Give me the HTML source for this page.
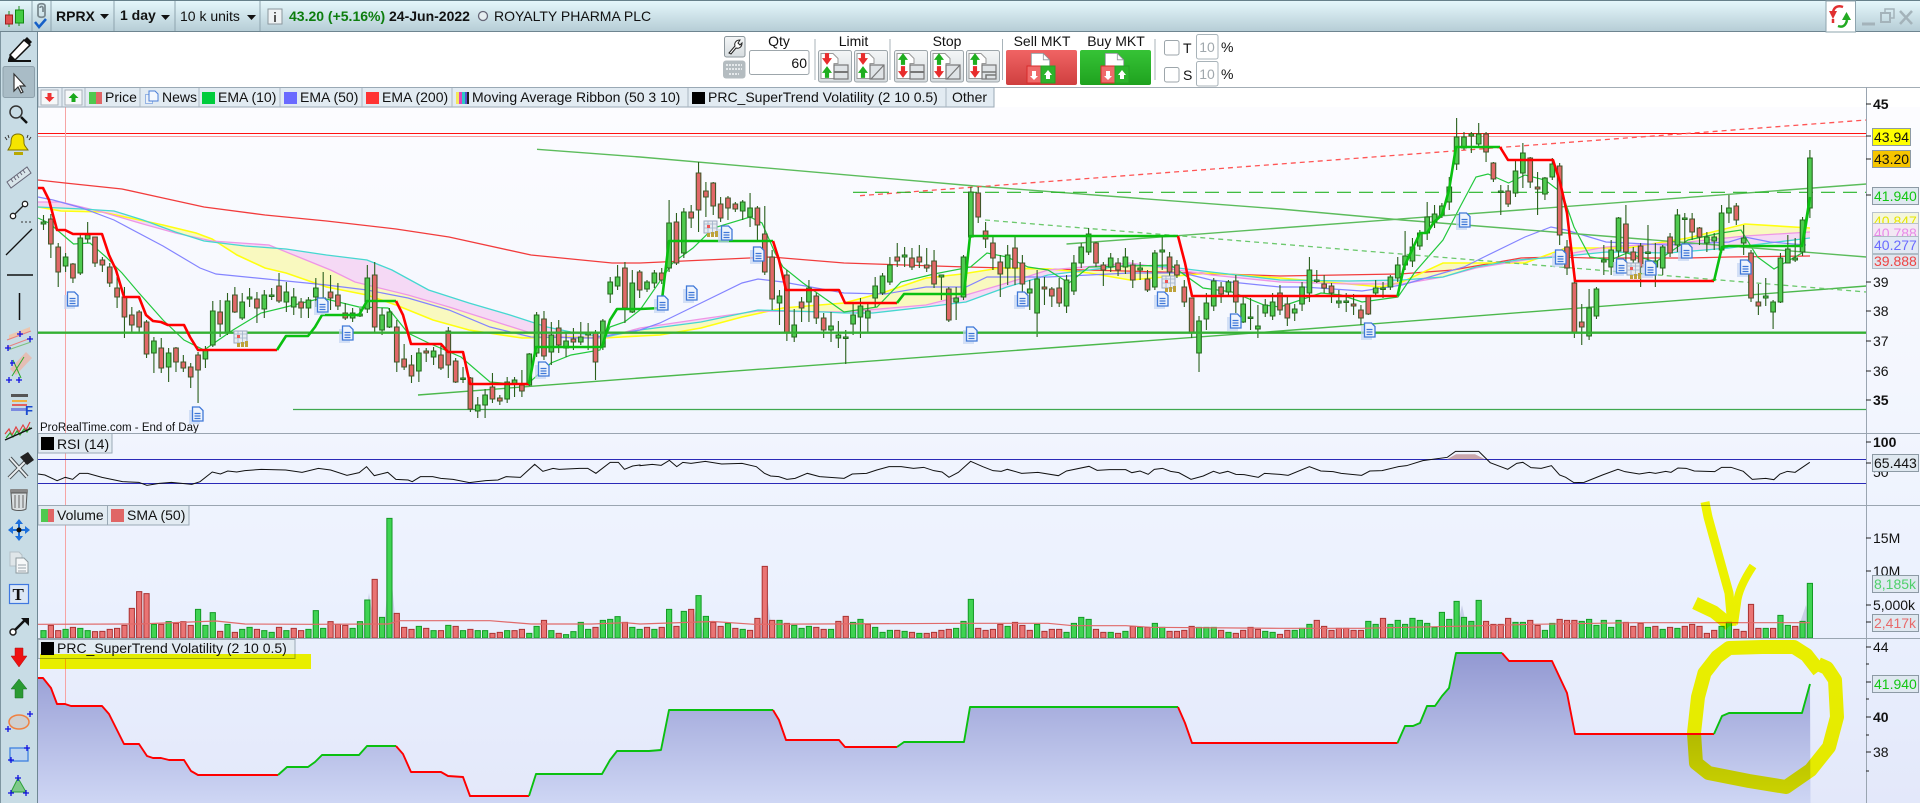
<!DOCTYPE html>
<html><head><meta charset="utf-8"><title>RPRX</title>
<style>
html,body{margin:0;padding:0;background:#fff;width:1920px;height:803px;overflow:hidden}
svg{display:block;position:absolute;left:0;top:0}
text{font-family:"Liberation Sans",Arial,sans-serif;font-size:14px;fill:#111}
.b{font-weight:bold}
.lg{fill:#e2ebf2;stroke:#9aa9b5}
.sep{stroke:#9fb0ba;stroke-width:1}
</style></head><body>
<svg width="1920" height="803" viewBox="0 0 1920 803" xmlns="http://www.w3.org/2000/svg">
<defs>
<linearGradient id="tb" x1="0" y1="0" x2="0" y2="1"><stop offset="0" stop-color="#e6f8fc"/><stop offset="1" stop-color="#b5ccd5"/></linearGradient>
<linearGradient id="pg" gradientUnits="userSpaceOnUse" x1="0" y1="107" x2="0" y2="803"><stop offset="0" stop-color="#fcfcff"/><stop offset=".4" stop-color="#f3f6fe"/><stop offset=".7" stop-color="#ebf1fe"/><stop offset="1" stop-color="#e3e8fa"/></linearGradient>
<linearGradient id="sf" gradientUnits="userSpaceOnUse" x1="0" y1="650" x2="0" y2="803"><stop offset="0" stop-color="#9197d1"/><stop offset="1" stop-color="#ced6f4"/></linearGradient>
<linearGradient id="sb" x1="0" y1="0" x2="0" y2="1"><stop offset="0" stop-color="#f06464"/><stop offset="1" stop-color="#cf3f3f"/></linearGradient>
<linearGradient id="bb" x1="0" y1="0" x2="0" y2="1"><stop offset="0" stop-color="#36c336"/><stop offset="1" stop-color="#1fa21f"/></linearGradient>
<linearGradient id="btn" x1="0" y1="0" x2="0" y2="1"><stop offset="0" stop-color="#f4f6f7"/><stop offset="1" stop-color="#d6dcdf"/></linearGradient>
<clipPath id="cp"><rect x="38" y="107" width="1828.5" height="326"/></clipPath>
<clipPath id="cv"><rect x="38" y="505" width="1828.5" height="133"/></clipPath>
<symbol id="dc" viewBox="0 0 16 19" width="16" height="19" overflow="visible">
<path d="M0 4h11v14H0z" fill="#c5d6f2" opacity=".7"/>
<path d="M3.5 1h7l3.5 3.5V15H3.500z" fill="#eef4fd" stroke="#3f78d8" stroke-width="1.300"/>
<path d="M5.500 7.500h6M5.500 10h6M5.500 12.500h6" stroke="#3f78d8" stroke-width="1.200"/>
</symbol>
<symbol id="cal" viewBox="0 0 16 18" width="16" height="18">
<rect x="1" y="1" width="13" height="12" fill="#e8ecf2" stroke="#9aa7bd"/>
<path d="M1 4h13M5 1v12M9.500 1v12M1 8h13" stroke="#9fb1c9" stroke-width=".8"/>
<rect x="4" y="5" width="3" height="3" fill="#ee5555"/>
<path d="M4 13h3v4H4zM8 12h3v5H8zM12 11h3v6h-3z" fill="#bda23a"/>
</symbol>
<symbol id="dn" viewBox="0 0 12 14" width="12" height="14"><path d="M3.500 0h5v6H12L6 14 0 6h3.500z" fill="#e82c2c"/></symbol>
<symbol id="up" viewBox="0 0 12 14" width="12" height="14"><path d="M3.500 14h5V8H12L6 0 0 8h3.500z" fill="#1fae1f"/></symbol>
<symbol id="dp" viewBox="0 0 24 30" width="24" height="30"><path d="M.5.5h15l8 8v21H.5z" fill="#fff" stroke="#8c9498"/><path d="M15.500.5v8h8" fill="none" stroke="#8c9498"/></symbol>
</defs>

<!-- base -->
<rect width="1920" height="803" fill="#fff"/>
<rect x="0" y="87" width="1920" height="716" fill="url(#pg)"/>
<rect x="38" y="87" width="1882" height="20" fill="#fff"/>
<path d="M38 87.500H1920" stroke="#a3adb5"/>

<!-- red top lines -->
<path d="M38 133.500H1866" stroke="#f11" stroke-width="1"/>
<path d="M38 136.500H1866" stroke="#fb9c9c" stroke-width="1"/>
<path d="M65.500 107V803" stroke="#f6a4a4" stroke-width="1"/>

<!-- price overlays -->
<g clip-path="url(#cp)">
<g id="rib"></g>
<path d="M537 149.300L640 157L975 186L1280 209L1402 220L1566 233L1866.500 257" fill="none" stroke="#5cbc5c" stroke-width="1.400"/>
<path d="M418 395L640 378L1280 331L1866.500 286" fill="none" stroke="#4cb84c" stroke-width="1.400"/>
<path d="M1066.500 244L1280 228L1866.500 184" fill="none" stroke="#5cbc5c" stroke-width="1.400"/>
<path d="M985 220L1866.500 292" fill="none" stroke="#6cc86c" stroke-width="1.300" stroke-dasharray="5 4"/>
<path d="M860 195.700L1280 164L1866.500 120" fill="none" stroke="#f55" stroke-width="1.300" stroke-dasharray="5 4"/>
<path d="M853 192.300H1866.500" fill="none" stroke="#27b327" stroke-width="1.200" stroke-dasharray="14 8"/>
<path d="M293 409.500H1866.500" stroke="#3fa84f" stroke-width="1.200"/>
<g id="cand"></g>
<path d="M38 332.700H1866.500" stroke="#33b033" stroke-width="2.400"/>
<g id="st1"></g>
<g id="icons">
<use href="#dc" x="64" y="291"/><use href="#dc" x="189" y="406"/><use href="#dc" x="314" y="297"/>
<use href="#cal" x="233" y="330"/><use href="#dc" x="339" y="325"/><use href="#dc" x="535" y="361"/>
<use href="#cal" x="703" y="220"/><use href="#dc" x="718" y="225"/><use href="#dc" x="750" y="246"/>
<use href="#dc" x="654" y="295"/><use href="#dc" x="683" y="285"/><use href="#dc" x="963" y="326"/>
<use href="#dc" x="1014" y="291"/><use href="#dc" x="1154" y="291"/><use href="#dc" x="1227" y="313"/>
<use href="#cal" x="1161" y="275"/><use href="#dc" x="1456" y="212"/><use href="#dc" x="1552" y="249"/>
<use href="#dc" x="1361" y="322"/><use href="#dc" x="1678" y="243"/><use href="#dc" x="1613" y="258"/>
<use href="#dc" x="1642" y="260"/><use href="#dc" x="1737" y="259"/><use href="#cal" x="1626" y="262"/>
</g>
</g>
<text x="40" y="431" style="font-size:11.500px">ProRealTime.com - End of Day</text>

<!-- panel separators -->
<path d="M38 433.500H1920M38 505.500H1920" stroke="#9aa5b1" stroke-width="1"/>

<!-- RSI -->
<path d="M38 459.500H1866.500M38 483.500H1866.500" stroke="#2a2ab8" stroke-width="1"/>
<path id="rsif" d="M1447 459.300L1456 454.300H1475L1485 459.300z" fill="#c9a6ac"/>
<polyline id="rsi" fill="none" stroke="#111" stroke-width="1"/>

<!-- Volume -->
<g clip-path="url(#cv)">
<path d="M132 638L139 600L146 638zM362 638L369 593L376 638zM383 638L390 562L397 638zM690 638L697 603L704 638zM759 638L766 588L773 638zM964 638L970 613L977 638zM1455 638L1462 605L1469 638zM1795 638L1806 605L1812 638z" fill="#c9cfe8"/>
<g id="vol"></g>
<polyline id="sma" fill="none" stroke="#e06a6a" stroke-width="1.200"/>
</g>
<path d="M38 638.500H1920" stroke="#9aa5b1" stroke-width="1"/>

<!-- Supertrend panel -->
<polygon id="stf" fill="url(#sf)"/>
<g id="st2"></g>

<!-- right axis -->
<path d="M1866.500 87V803" stroke="#9aa5b1" stroke-width="1"/>
<path d="M1866 104h5M1866 136h5M1866 159h5M1866 195h5M1866 282h5M1866 311h5M1866 341h5M1866 371h5M1866 400h5M1866 442h5M1866 463h5M1866 538h5M1866 571h5M1866 605h5M1866 622h5M1866 647h5M1866 664h3M1866 682h5M1866 699h3M1866 717h5M1866 735h3M1866 752h5M1866 771h3" stroke="#222" stroke-width="1"/>
<text class="b" x="1873" y="109">45</text>
<text x="1873" y="287">39</text><text x="1873" y="316">38</text><text x="1873" y="346">37</text><text x="1873" y="376">36</text>
<text class="b" x="1873" y="405">35</text><text class="b" x="1873" y="447">100</text><text x="1873" y="477">50</text>
<text x="1873" y="543">15M</text><text x="1873" y="576">10M</text><text x="1873" y="610">5,000k</text>
<text x="1873" y="652">44</text><text class="b" x="1873" y="722">40</text><text x="1873" y="757">38</text>

<rect x="1872.500" y="212.500" width="46" height="15" fill="#f4f6dc" stroke="#b9c3cc"/><text x="1874" y="226" style="fill:#e6e600">40.847</text>
<rect x="1872.500" y="223.500" width="46" height="13" fill="#f3e8f4" stroke="#b9c3cc"/><text x="1874" y="238" style="fill:#e88ae8">40.788</text>
<rect x="1872.500" y="236.500" width="46" height="17" fill="#e2e9f4" stroke="#b0bcc6"/><text x="1874" y="250" style="fill:#6a6aff">40.277</text>
<rect x="1872.500" y="254.500" width="46" height="14" fill="#dfe5ee" stroke="#b0bcc6"/><text x="1874" y="266" style="fill:#ee4444">39.888</text>
<rect x="1872.500" y="187.500" width="46" height="17" fill="#dfe8f0" stroke="#8d9aa5"/><text x="1874" y="201" style="fill:#12c612">41.940</text>
<rect x="1872.500" y="128.500" width="38" height="17" fill="#ffff00" stroke="#8d9aa5"/><text x="1874" y="142">43.94</text>
<rect x="1872.500" y="150.500" width="38" height="17" fill="#f6c500" stroke="#8d9aa5"/><text x="1874" y="164">43.20</text>
<rect x="1872.500" y="454.500" width="46" height="17" fill="#dfe8f0" stroke="#8d9aa5"/><text x="1874" y="468">65.443</text>
<rect x="1872.500" y="575.500" width="46" height="17" fill="#dfe8f0" stroke="#8d9aa5"/><text x="1874" y="589" style="fill:#4fd06a">8,185k</text>
<rect x="1872.500" y="614.500" width="46" height="17" fill="#dfe8f0" stroke="#8d9aa5"/><text x="1874" y="628" style="fill:#e86a6a">2,417k</text>
<rect x="1872.500" y="675.500" width="46" height="17" fill="#dfe8f0" stroke="#8d9aa5"/><text x="1874" y="689" style="fill:#12c612">41.940</text>

<!-- legends -->
<rect class="lg" x="38" y="87.500" width="956" height="19.500"/>
<path class="sep" d="M62 88v19M85 88v19M140 88v19M199 88v19M280 88v19M362 88v19M452 88v19M688 88v19M946 88v19" style="stroke:#a9b7c2"/>
<rect x="41" y="90" width="17" height="15" fill="#f6f8f9" stroke="#a9b2ba"/><path d="M47.500 93h4v4h3L49.500 102 44.500 97h3z" fill="#e33"/>
<rect x="65" y="90" width="17" height="15" fill="#f6f8f9" stroke="#a9b2ba"/><path d="M71.500 102h4v-4h3L73.500 93 68.500 98h3z" fill="#1aa81a"/>
<rect x="89" y="92" width="7" height="12" fill="#4fc84f"/><rect x="96" y="92" width="6" height="12" fill="#e06666"/>
<text x="105" y="102">Price</text>
<g fill="#f4f8fe" stroke="#4b7fd8"><path d="M145.500 94.500h7v9h-7z" opacity=".5"/><path d="M149 91h6l3 3v7h-9z"/></g>
<text x="162" y="102">News</text>
<rect x="202" y="92" width="13" height="12" fill="#00cc3c"/><text x="218" y="102">EMA (10)</text>
<rect x="284" y="92" width="13" height="12" fill="#6a6aff"/><text x="300" y="102">EMA (50)</text>
<rect x="366" y="92" width="13" height="12" fill="#ff3333"/><text x="382" y="102">EMA (200)</text>
<g><rect x="456" y="92" width="3" height="12" fill="#f4e75a"/><rect x="459" y="92" width="3" height="12" fill="#e040c0"/><rect x="462" y="92" width="3" height="12" fill="#2bc8c8"/><rect x="465" y="92" width="2" height="12" fill="#5a4fd0"/><rect x="467" y="92" width="2" height="12" fill="#222"/></g>
<text x="472" y="102">Moving Average Ribbon (50 3 10)</text>
<rect x="692" y="92" width="13" height="12" fill="#000"/><text x="708" y="102">PRC_SuperTrend Volatility (2 10 0.5)</text>
<text x="952" y="102">Other</text>

<rect class="lg" x="38" y="433.500" width="74" height="19.500"/><rect x="41" y="437" width="13" height="13" fill="#000"/><text x="57" y="449">RSI (14)</text>
<rect class="lg" x="38" y="505.500" width="151" height="19.500"/><path d="M107.500 506v19" stroke="#9aa9b5"/>
<rect x="41" y="509" width="7" height="13" fill="#4fc84f"/><rect x="48" y="509" width="6" height="13" fill="#e06666"/><text x="57" y="520">Volume</text>
<rect x="111" y="509" width="13" height="13" fill="#e06666"/><text x="127" y="520">SMA (50)</text>
<rect class="lg" x="38" y="639.500" width="257" height="19"/><rect x="41" y="642" width="13" height="13" fill="#000"/><text x="57" y="653">PRC_SuperTrend Volatility (2 10 0.5)</text>

<!-- yellow marker -->
<g style="mix-blend-mode:multiply" fill="none" stroke="#ffff00" stroke-linejoin="round" stroke-linecap="butt">
<rect x="40" y="654" width="271" height="15" fill="#ffff00" stroke="none"/>
<path d="M1705 502L1708 517L1719 557L1729 593L1732 626" stroke-width="9"/>
<path d="M1753 566C1745 578 1738 592 1737 603L1734 624" stroke-width="8"/>
<path d="M1695 603L1714 612L1730 625" stroke-width="13"/>
<path d="M1819 671L1806.500 655L1794 647L1762 647L1729 648L1717 657L1704.500 673L1698 697L1694 733L1696 763L1708.500 773L1749 781L1786 787L1810.600 770L1829 747L1837 717L1835 680L1827 668L1818 664" stroke-width="14"/>
</g>

<!-- top bar -->
<rect x="0" y="0" width="1920" height="32" fill="url(#tb)"/>
<path d="M0 .5H1920" stroke="#66808a"/><path d="M0 31.500H1920" stroke="#6e8590"/>
<path d="M32 1v30M51 1v30M114 1v30M175 1v30M260 1v30" stroke="#8ea4ae"/>
<path d="M9 11v16M19 6v20" stroke="#1a8a1a"/><rect x="5.500" y="15" width="7" height="9" fill="#e05050" stroke="#a02020"/><rect x="15.500" y="10" width="8" height="13" fill="#44cc44" stroke="#118811"/>
<path d="M38 6c0-3 7-3 7 0v9c0 3-7 3-7 0zM40 8c0-2 3-2 3 0v4" fill="none" stroke="#7b8a90" stroke-width="1.800"/>
<path d="M35 22l4 5 7-8" fill="none" stroke="#1560c8" stroke-width="2.500"/>
<text class="b" x="56" y="21">RPRX</text><path d="M100 14h9l-4.500 5z" fill="#111"/>
<text class="b" x="120" y="20">1 day</text><path d="M161 15h9l-4.500 5z" fill="#111"/>
<text x="180" y="21">10 k units</text><path d="M247 15h9l-4.500 5z" fill="#111"/>
<rect x="268" y="9" width="14" height="15" fill="#eef2f4" stroke="#8b979d"/><path d="M275 12v1.500M275 15v7" stroke="#555" stroke-width="2"/>
<text class="b" x="289" y="21" style="fill:#0d7d0d">43.20 (+5.16%)</text>
<text class="b" x="389" y="21">24-Jun-2022</text>
<circle cx="483" cy="16" r="4.500" fill="#e6eef1" stroke="#667" stroke-width="1.300"/>
<text x="494" y="21">ROYALTY PHARMA PLC</text>

<rect x="1826" y="1" width="29.500" height="31" fill="#fff" stroke="#8ea4ae"/>
<path d="M1843 7c-5-2-9 0-10 5" fill="none" stroke="#e03030" stroke-width="2.500"/><path d="M1829 11h8l-4 8z" fill="#e03030"/><path d="M1833 19v4" stroke="#e03030" stroke-width="2.500"/>
<path d="M1838 26c5 2 8-1 9-6" fill="none" stroke="#22aa22" stroke-width="2.500"/><path d="M1842 20h9l-4.500-8z" fill="#22aa22"/>
<path d="M1862 24h13" stroke="#a4b3ba" stroke-width="3"/>
<rect x="1881" y="13" width="9" height="9" fill="none" stroke="#a4b3ba" stroke-width="2"/><path d="M1885 12v-3h9v9h-3" fill="none" stroke="#a4b3ba" stroke-width="1.500"/>
<path d="M1900 11l12 13M1912 11l-12 13" stroke="#a4b3ba" stroke-width="2.500"/>

<!-- left toolbar -->
<rect x="0" y="32" width="37.500" height="771" fill="#c8dce5"/>
<path d="M37.500 32V803" stroke="#6f8793" stroke-width="1"/><path d="M.5 32V803" stroke="#7e95a0"/>
<rect x="3" y="66.500" width="31.500" height="31" rx="2" fill="#a9bcc6" stroke="#8da0ab"/>
<!-- pen -->
<path d="M10 55L24 40l6 5-15 15z" fill="#fff" stroke="#111" stroke-width="1.500"/><path d="M24 40l3-3 5 5-3 3z" fill="#111"/><path d="M8 61h23" stroke="#111" stroke-width="2"/><path d="M8 60l2-5 5 5z" fill="#111"/>
<!-- cursor -->
<path d="M14 74v17l4-4 3 6 2-1-3-6h5z" fill="#fff" stroke="#333" stroke-width="1.200"/>
<!-- magnifier -->
<circle cx="16" cy="112" r="6" fill="none" stroke="#333" stroke-width="1.500"/><path d="M21 117l6 6" stroke="#111" stroke-width="2.500"/>
<!-- bell -->
<path d="M18 134c6 0 6 4 6 9 0 3 3 5 4 7H8c1-2 3-4 3-7 0-5 1-9 7-9z" fill="#f5e400" stroke="#7c7000"/><rect x="14" y="152" width="9" height="3" fill="#b8a800"/>
<path d="M7 140l-2-3M29 140l2-3M9 138l-1-3M27 138l1-3" stroke="#333" stroke-width="1"/>
<!-- ruler -->
<path d="M7 182l20-15 4 6-20 15z" fill="#d9e5ea" stroke="#667" /><path d="M11 179l2 3M14 177l2 3M17 175l2 3M20 172l2 3M23 170l2 3" stroke="#667"/>
<!-- points -->
<circle cx="13" cy="216" r="2.700" fill="#fff" stroke="#222" stroke-width="1.300"/><circle cx="25" cy="204" r="2.700" fill="#fff" stroke="#222" stroke-width="1.300"/><path d="M15 214l8-8" stroke="#222" stroke-width="1.300"/>
<path d="M21 222h2M25 222h2M29 222h2" stroke="#333"/>
<!-- lines -->
<path d="M6 255L32 229" stroke="#111" stroke-width="1.300"/>
<path d="M7 275H33" stroke="#111" stroke-width="1.500"/>
<path d="M19.500 293V320" stroke="#111" stroke-width="1.500"/>
<!-- channel -->
<path d="M9 340l21-8 0-5-21 8z" fill="#f5c1a0" opacity=".8"/><path d="M7 347l24-9M7 340l24-9" stroke="#e68080" /><path d="M8 350l23-8" stroke="#7cc07c"/>
<path d="M5 348h6M8 345v6M27 339h6M30 336v6M17 334h6M20 331v6" stroke="#1212e0" stroke-width="1.300"/>
<!-- fork -->
<path d="M10 369l16-17 6 6-16 17z" fill="#f0b0a0" opacity=".7"/><path d="M13 360l8 18" stroke="#2aaa2a"/><path d="M24 357l-12 19" stroke="#2aaa2a"/>
<path d="M6 380h6M9 377v6M16 380h6M19 377v6M10 363h5M12 360v6" stroke="#1212e0" stroke-width="1.300"/>
<!-- fib -->
<rect x="11" y="394" width="17" height="3" fill="#555"/><rect x="12" y="400" width="15" height="2" fill="#f0b040"/><rect x="12" y="404" width="15" height="2" fill="#e06060"/><rect x="11" y="408" width="16" height="3" fill="#7a8ae0"/>
<text x="25" y="415" class="b" style="fill:#1a4bd0;font-size:13px">F</text>
<!-- wave -->
<path d="M5 434l4-5 3 6 4-8 3 5 4-7 3 5 4-8" fill="none" stroke="#e04040" stroke-width="1.200"/><path d="M6 438l4-5 3 4 4-6 3 4 4-6 3 3 3-5" fill="none" stroke="#2aaa2a" stroke-width="1.200"/><path d="M5 440L32 428" stroke="#111" stroke-width="1.400"/>
<!-- tools -->
<path d="M9 478l18-18M10 458l17 19" stroke="#4a5256" stroke-width="4"/><path d="M9 478l18-18M10 458l17 19" stroke="#e9eef0" stroke-width="2"/><path d="M20 457l8-5 6 8-7 5z" fill="#222"/>
<!-- trash -->
<rect x="10" y="489" width="18" height="4" rx="1" fill="#888"/><path d="M11 493l1 16c3 2 11 2 14 0l1-16z" fill="#d9dee0" stroke="#555"/><path d="M15 495v13M19 495v13M23 495v13" stroke="#666"/>
<!-- move -->
<path d="M19 519l-4 5h8zM19 541l-4-5h8zM8 530l5-4v8zM30 530l-5-4v8z" fill="#1c6fdc"/><path d="M13 530h12M19 524v12" stroke="#1c6fdc" stroke-width="2"/><circle cx="19" cy="530" r="2.500" fill="#111"/>
<!-- doc -->
<path d="M10 552h9l3 3v11H10z" fill="#dfe6e9" stroke="#b4c0c6"/><path d="M16 558h8l4 4v11H16z" fill="#f6f8f9" stroke="#8e9aa0"/><path d="M18 565h8M18 568h8M18 571h8" stroke="#9aa4aa"/>
<!-- T -->
<rect x="9.500" y="584.500" width="19" height="19" fill="#dce8f6" stroke="#3f78e0" stroke-width="1.200"/><text x="12.500" y="600" class="b" style="font-family:'Liberation Serif',serif;font-size:17px">T</text>
<!-- arrow tool -->
<circle cx="13" cy="632" r="3" fill="#fff" stroke="#222" stroke-width="1.500"/><path d="M15 630l10-10" stroke="#111" stroke-width="2.500"/><path d="M21 618h8v8z" fill="#111"/>
<!-- down/up -->
<path d="M15 648h8v8h4l-8 11-8-11h4z" fill="#ee1111" stroke="#aa1111" stroke-width=".5"/>
<path d="M15 698h8v-9h4l-8-10-8 10h4z" fill="#2a9a32" stroke="#1a6e22" stroke-width=".5"/>
<!-- ellipse -->
<ellipse cx="19" cy="722" rx="10" ry="7" fill="#cfd0d0" stroke="#f08040" stroke-width="1.500"/><path d="M27 714h6M30 711v6M5 729h6M8 726v6" stroke="#1212e0" stroke-width="1.300"/>
<!-- rect -->
<rect x="10" y="748" width="18" height="13" fill="#bcd4ee" stroke="#3f80e0" stroke-width="1.300"/><path d="M24 748h6M27 745v6M8 760h6M11 757v6" stroke="#1212e0" stroke-width="1.300"/>
<!-- triangle -->
<path d="M18 778l-7 14h15z" fill="#7fc98a" stroke="#2aa038"/><path d="M15 778h6M18 775v6M8 793h6M11 790v6M23 793h6M26 790v6" stroke="#1212e0" stroke-width="1.300"/>

<!-- trade toolbar -->
<rect x="724.500" y="36.500" width="20.500" height="20.500" rx="2" fill="url(#btn)" stroke="#8d979c"/>
<path d="M729 53l6-7c-1-3 1-6 5-6l-2 3 2 2 2-2c0 4-3 6-6 5l-5 6z" fill="#fff" stroke="#222" stroke-width="1"/>
<rect x="723" y="60.500" width="22.500" height="18" rx="3" fill="#b4bcc0"/><path d="M726 65h16M726 69h16M729 74h10" stroke="#e5e9eb" stroke-width="2" stroke-dasharray="2 1"/>
<text x="779" y="46" text-anchor="middle">Qty</text>
<rect x="749.500" y="50.500" width="59.500" height="24" rx="2" fill="#fff" stroke="#9da6ab"/><text x="807" y="68" text-anchor="end">60</text>
<path d="M815 39v41M890 39v41M1002.500 39v41M1155 39v41" stroke="#a8b3b9"/>
<text x="853.500" y="46" text-anchor="middle">Limit</text><text x="947" y="46" text-anchor="middle">Stop</text>
<text x="1042" y="46" text-anchor="middle">Sell MKT</text><text x="1116" y="46" text-anchor="middle">Buy MKT</text>
<g id="tb1">
<rect x="818.500" y="50.500" width="33" height="31.500" rx="2" fill="url(#btn)" stroke="#9da6ab"/>
<rect x="854.500" y="50.500" width="33" height="31.500" rx="2" fill="url(#btn)" stroke="#9da6ab"/>
<rect x="894.500" y="50.500" width="33" height="31.500" rx="2" fill="url(#btn)" stroke="#9da6ab"/>
<rect x="930.500" y="50.500" width="33" height="31.500" rx="2" fill="url(#btn)" stroke="#9da6ab"/>
<rect x="966.500" y="50.500" width="33" height="31.500" rx="2" fill="url(#btn)" stroke="#9da6ab"/>
<path d="M821 53.500h12l5 5v5h-4v15h-13z" fill="#fff" stroke="#9a9a9a"/><path d="M857 53.500h12l5 5v5h-4v15h-13z" fill="#fff" stroke="#9a9a9a"/><path d="M897 53.500h12l5 5v5h-4v15h-13z" fill="#fff" stroke="#9a9a9a"/><path d="M933 53.500h12l5 5v5h-4v15h-13z" fill="#fff" stroke="#9a9a9a"/><path d="M969 53.500h12l5 5v5h-4v15h-13z" fill="#fff" stroke="#9a9a9a"/>
<use href="#dn" x="822" y="53" width="10" height="12"/><use href="#up" x="822" y="66" width="10" height="12"/>
<use href="#dn" x="858" y="53" width="10" height="12"/><use href="#up" x="858" y="66" width="10" height="12"/>
<use href="#up" x="898" y="53" width="10" height="12"/><use href="#dn" x="898" y="66" width="10" height="12"/>
<use href="#up" x="934" y="53" width="10" height="12"/><use href="#dn" x="934" y="66" width="10" height="12"/>
<use href="#up" x="970" y="53" width="10" height="12"/><use href="#dn" x="970" y="66" width="10" height="12"/>
<g fill="#dfe3e6" stroke="#777" stroke-width="1.200"><rect x="834" y="65" width="14" height="14"/><rect x="870" y="65" width="14" height="14"/><rect x="910" y="65" width="14" height="14"/><rect x="946" y="65" width="14" height="14"/><rect x="982" y="65" width="14" height="14"/></g>
<path d="M834 72h14M910 72h14" stroke="#777" stroke-width="2"/><path d="M871 79l13-14M947 79l13-14" stroke="#777" stroke-width="1.200"/><path d="M982 72h14M986 79v-4h10" fill="none" stroke="#777" stroke-width="1.500"/>
</g>
<rect x="1006" y="50" width="71" height="35" rx="2" fill="url(#sb)"/><rect x="1080" y="50" width="71" height="35" rx="2" fill="url(#bb)"/>
<use href="#dp" x="1030" y="53" width="21" height="24"/><use href="#dp" x="1104" y="53" width="21" height="24"/>
<rect x="1027" y="66" width="14" height="17" fill="#ef6a6a" stroke="#d82a2a"/><rect x="1041" y="66" width="14" height="17" fill="#2cb32c" stroke="#26a026"/>
<rect x="1101" y="66" width="14" height="17" fill="#ef6a6a" stroke="#d82a2a"/><rect x="1115" y="66" width="14" height="17" fill="#2cb32c" stroke="#26a026"/>
<path d="M1032 71h4v5h2l-4 4-4-4h2zM1046 79h4v-4h2l-4-5-4 5h2zM1106 71h4v5h2l-4 4-4-4h2zM1120 79h4v-4h2l-4-5-4 5h2z" fill="#fff"/>
<rect x="1164.500" y="40.500" width="14.500" height="14.500" rx="2" fill="#fff" stroke="#9da6ab"/><text x="1183" y="53">T</text>
<rect x="1196.500" y="34.500" width="21.500" height="24.500" rx="2" fill="#fff" stroke="#a8b3b9"/><text x="1207" y="52" text-anchor="middle" style="fill:#a0a8ad">10</text><text x="1221" y="52">%</text>
<rect x="1164.500" y="67.500" width="14.500" height="14.500" rx="2" fill="#fff" stroke="#9da6ab"/><text x="1183" y="80">S</text>
<rect x="1196.500" y="61.500" width="21.500" height="24.500" rx="2" fill="#fff" stroke="#a8b3b9"/><text x="1207" y="79" text-anchor="middle" style="fill:#a0a8ad">10</text><text x="1221" y="79">%</text>
</svg>

<script>
var NS="http://www.w3.org/2000/svg";
function add(g,tag,a){var e=document.createElementNS(NS,tag);for(var k in a)e.setAttribute(k,a[k]);g.appendChild(e);return e}
function $(i){return document.getElementById(i)}
function P(a){var s=[];for(var i=0;i<a.length;i+=2)s.push(a[i]+","+a[i+1]);return s}
var X=function(i){return 43.5+7.36*i};

/* ribbon + EMA */
var cy=[38,207,82,209,114,211,143,220,175.5,232,204,241,245,246,286,249,326.5,255,367,260,392,270,428.6,290,469,303,510,315,547,327,571,332,604,337,640,330,701,322,758,310,824,312,844,313,873,313,926,307,966,302,1007,287,1048,275,1089,270,1130,265,1170,267,1211,272,1280,280,1349,281,1402,280,1443,277,1476,267,1517,260,1557,257,1606.5,252,1668,253,1729,248,1810,238];
var pk=[38,202,61,202,102,212,143,224,175.5,233,212,241,269,245,306,260,330.6,270,355,282,408,295,449,307,490,320,531,333,571,338,604,338,640,328,701,319,758,311,844,312,926,305,966,295,1007,283,1048,270,1130,263,1211,275,1280,282,1349,284,1402,284,1443,277,1476,268,1525,260,1562,255,1606,247,1688,242,1745,236,1810,232];
var yl=[38,207,61,211,102,212,163,225,196,233,212,239,237,255,265,268,286,273,326.5,287,367,295,396,305,433,320,469,330,522,338,571,337,604,338,640,336,660,335,701,328,742,317,783,308,844,303,885,292,926,278,962,274,1000,268,1050,269,1089,273,1130,280,1211,273,1280,278,1349,284,1382,287,1402,282,1443,263,1525,263,1566,248,1627,248,1688,238,1745,224,1810,228];
function rev(a){var r=[];for(var i=a.length-2;i>=0;i-=2)r.push(a[i],a[i+1]);return r}
var rib=$("rib");
add(rib,"polygon",{points:P(yl.concat(rev(pk))).join(" "),fill:"#f9f9bf"});
add(rib,"polygon",{points:P(pk.concat(rev(cy))).join(" "),fill:"#f5d9f5"});
var em2=[38,180,65,183,122,189,163,198,204,207,265,215,326.5,221,396,229,449,237,531,255,612,263,640,263,771,257,844,263,966.5,267,1163,272,1280,276,1400,274,1453,270,1521,258,1557,257,1590,258,1688,258,1729,257,1810,256];
var em5=[38,197,53,200,82,208,114,220,163,246,200,268,216,274,326.5,285,367,290,408,298,449,310,490,327,531,337,592,338,640,330,660,323,701,303,742,283,758,279,783,282,844,293,885,294,926,287,966,287,987,277,1048,277,1130,273,1183,273,1211,280,1280,287,1304,287,1362,291,1402,285,1443,273,1464,267,1484,257,1525,237,1551,227,1566,230,1606,242,1668,245,1729,242,1745,237,1770,242,1806,245];
var em1=[38,218,49,223,73.5,244,90,243,106,257,122,273,139,293,163,320,184,340,204,350,233,330,261,313,286,307,322,298,359,307,388,308,408,333,428.6,343,461,357,490,382,526.5,385,551,363,571,355,600,350,610,327,624.5,322,640,310,672.6,263,693,248,713.5,228,750,217,762,223,775,253,783,267,803,283,844,312,877,307,901,282,934,274,970.6,267,987,253,1007,257,1028,267,1048,270,1069,283,1089,267,1170.6,265,1203,288,1232,292,1264,305,1280,307,1321,293,1341,295,1362,302,1398,297,1415,272,1443,240,1460,207,1476,177,1488,174,1508.6,183,1525,175,1545,180,1562,193,1574,227,1590,257,1610.6,260,1627,253,1655.5,262,1688,240,1721,233,1741,230,1757.5,257,1774,269,1802,253,1810.6,200];
function L(a,c,w){add(rib,"polyline",{points:P(a).join(" "),fill:"none",stroke:c,"stroke-width":w})}
L(em2,"#f23c3c",1.3);L(yl,"#ffff10",1.6);L(pk,"#ee96e6",1.3);L(cy,"#45d8d0",1.3);L(em5,"#8484ff",1.2);L(em1,"#22c83c",1.2);

/* candles */
var c=[215,222,224,230,-214,219,244,258,-243,247,272,287,253,257,266,272,-263,264,278,283,235,238,273,275,222,235,239,243,-237,237,263,267,-257,260,265,272,-263,267,283,287,
-277,288,297,308,-287,297,317,338,-307,315,325,332,-310,312,327,333,-320,322,354,358,337,341,353,373,-338,348,368,373,348,353,367,382,-347,348,362,372,-355,362,368,372,
-363,367,377,388,-352,355,370,403,346,350,359,368,301,311,345,347,-300,312,324,337,293,301,333,335,-287,295,312,313,293,302,318,320,288,297,299,307,-292,299,308,323,
290,295,309,318,288,295,296,300,-273,286,301,303,282,292,302,312,288,297,307,315,-298,302,308,318,297,300,308,318,278,288,297,307,-272,298,300,307,-275,292,298,310,
-283,295,306,310,-303,313,318,320,308,313,318,322,308,314,316,317,265,278,309,313,-262,275,327,332,308,315,330,335,308,312,327,328,-320,327,362,372,-344,359,367,370,
-355,365,376,383,348,353,371,382,-348,351,353,362,347,351,357,365,-345,355,368,370,-327,331,365,378,-358,361,382,383,367,378,379,383,-377,378,409,412,397,405,411,418,
389,395,405,418,-373,387,399,403,-395,398,401,405,377,382,399,403,377,380,384,397,-370,385,391,397,353,354,385,386,312,315,353,357,-311,319,356,360,322,335,352,365,
-320,328,345,353,332,341,348,357,-328,339,342,350,322,337,342,345,323,333,335,350,-330,333,362,380,319,321,347,350,277,282,294,303,265,277,286,290,-262,268,308,323,
270,283,312,313,-270,272,290,298,280,282,289,292,270,273,283,288,-268,273,280,284,200,223,268,272,-213,222,263,265,208,212,253,258,-205,212,218,228,-162,173,210,232,
-182,191,197,217,-182,183,206,215,-197,204,218,222,-196,198,208,220,-202,204,209,212,200,202,211,220,193,208,217,227,-206,208,225,240,-206,234,272,275,-250,257,299,310,
290,296,303,325,-270,275,333,341,309,325,337,342,-297,302,308,322,280,288,302,322,-293,296,318,324,-313,318,330,338,312,326,330,342,321,335,338,348,330,337,338,364,
302,315,324,335,298,306,317,338,303,311,318,332,277,286,298,307,273,276,293,295,257,265,282,285,-243,257,261,267,247,255,257,267,-248,258,267,270,-245,257,262,268,
-248,265,268,272,-250,261,284,288,275,275,277,300,-287,289,320,322,287,298,302,320,255,257,297,300,187,192,237,238,-187,193,217,223,-222,231,239,248,-237,243,258,270,
-255,262,274,297,245,255,268,285,-237,248,268,285,-255,263,284,298,280,289,293,310,270,279,313,337,-277,287,289,305,-287,289,296,307,-278,288,303,307,275,280,306,313,
255,263,291,295,243,247,263,268,228,234,252,255,-242,243,263,267,-262,265,270,286,253,258,267,272,-258,263,270,276,248,257,267,274,-260,265,280,288,262,268,270,280,
-270,279,290,292,250,253,287,290,235,250,252,270,-252,257,272,280,-260,265,275,278,-280,287,302,307,-298,298,333,338,316,321,353,372,293,303,319,330,278,281,306,311,
-282,287,294,303,280,282,292,297,-275,281,302,313,297,304,322,323,298,317,318,330,305,326,329,338,299,305,313,317,293,302,316,320,-285,293,310,315,-295,304,318,326,
304,309,313,321,282,287,304,311,257,270,293,302,270,280,281,283,-275,284,288,293,-283,286,293,303,290,301,303,308,293,301,302,312,-294,304,306,315,-305,310,318,325,
-295,296,314,315,280,288,293,295,282,288,289,298,275,277,287,290,257,265,278,282,231,256,265,270,238,247,261,267,230,233,246,250,202,217,233,240,205,214,222,228,
203,206,215,218,177,187,202,210,118,137,164,170,132,137,148,150,132,134,136,153,123,134,144,147,-132,134,152,162,-162,163,179,182,185,191,192,215,-185,191,204,207,
160,171,193,197,143,153,173,188,-157,158,182,188,-172,187,189,215,177,178,194,200,158,164,177,180,-163,166,235,245,-240,247,268,275,-268,283,332,338,-304,322,327,345,
289,308,336,340,287,289,316,319,245,260,262,275,240,250,267,275,217,218,251,257,-205,224,252,263,-247,252,260,270,-243,246,267,287,225,252,253,263,243,261,267,287,
245,247,268,275,-233,237,253,257,209,215,245,252,213,218,219,252,-213,219,232,240,-227,228,237,245,232,237,243,252,233,237,241,250,205,213,250,253,195,208,213,223,
-203,206,220,225,225,238,243,255,-250,253,298,302,-284,302,306,315,278,296,298,306,300,302,312,329,253,258,302,303,235,249,263,263,238,258,260,262,217,220,252,256,150,158,208,218];
var g=$("cand"),wk="",gr="",rd="";
for(var i=0;i<c.length/4;i++){var h=c[i*4],t=c[i*4+1],b=c[i*4+2],l=c[i*4+3],x=X(i),red=h<0;h=Math.abs(h);
 wk+="M"+x+" "+h+"V"+l;
 var bd="M"+(x-2.3)+" "+t+"h4.6V"+Math.max(b,t+1.5)+"h-4.6z";
 if(red)rd+=bd;else gr+=bd;}
add(g,"path",{d:wk,stroke:"#2a5f1c","stroke-width":1.1,fill:"none"});
add(g,"path",{d:gr,fill:"#4fca4f",stroke:"#246a1e","stroke-width":1.1});
add(g,"path",{d:rd,fill:"#e26868",stroke:"#42562a","stroke-width":1.1});

/* volume */
var v=[392,-376,-392,388,-382,385,392,-395,-394,-388,-385,-376,-325,-275,-281,373,-373,365,-370,-365,-376,328,376,338,-394,373,-397,388,382,-388,392,397,-382,392,-385,-392,388,332,385,-365,-373,-376,385,365,300,-238,352,55,-340,-382,-388,379,-385,392,-392,376,-379,392,-388,392,392,-400,-397,392,-392,-388,400,379,-361,392,-400,404,395,367,388,-382,361,358,350,-367,382,388,
-382,388,-382,328,-379,334,-328,287,349,-367,-379,370,-385,388,-391,-355,-199,-361,361,-370,376,385,379,-382,-388,388,-364,-349,367,358,-373,382,397,391,-391,394,-397,400,-400,-397,-391,-388,385,364,298,-385,-391,-388,-373,379,-367,-376,-391,373,-394,-388,-388,397,370,352,358,-388,-397,397,-400,394,-379,382,-382,370,382,-394,-394,-391,-379,382,382,382,-391,397,-400,-391,-382,-388,394,397,-403,
-391,391,385,373,-361,-379,-391,-385,-385,-391,-391,364,373,-355,373,361,373,355,361,370,382,337,358,304,352,364,301,-364,-373,-373,-355,367,367,-361,-376,391,370,-358,-361,-361,364,358,376,361,382,361,-367,-379,-370,382,-379,388,-382,385,-379,-373,-379,-400,-391,379,367,-388,-394,-313,-385,385,-385,346,376,-379,364,250];
var vg="",vr="";
for(var i=0;i<v.length;i++){var y=500+Math.abs(v[i])/3,x=X(i);var d="M"+(x-2.6)+" "+y+"h5.2V638h-5.2z";if(v[i]<0)vr+=d;else vg+=d}
add($("vol"),"path",{d:vg,fill:"#3fd352",stroke:"#149a26","stroke-width":1});
add($("vol"),"path",{d:vr,fill:"#ea7474",stroke:"#a93232","stroke-width":1});
$("sma").setAttribute("points",P([38,624.3,139,624,216,621,245,624,310,624.3,388,624,400,620.7,490,620.7,531,624,592,624,625,622.7,640,624,713,621.5,754,624.3,966,623.3,1048,623.3,1073,625.7,1126,625.7,1150,627.3,1280,628.3,1362,628.3,1484,625.7,1533,624.3,1635,622.7,1810,622.7]).join(" "));

/* rsi */
var r=[];
function ra(o,a){for(var i=0;i<a.length;i+=2)r.push(o+a[i]/2.45,270+a[i+1]/3)}
ra(0,[93,612,110,615,140,632,160,622,178,628,195,610,215,610,250,622,300,635,340,637,360,646,390,640,420,637,470,643,490,635,520,606,540,612,558,603,580,606,600,602,640,598,700,600,740,607,780,595,810,600,850,616,880,608,898,590,917,617,950,607,970,628,1000,630,1010,635,1030,620,1060,620,1080,625,1110,628,1150,638,1190,632,1220,630,1240,620,1275,622,1310,583,1330,604,1355,595,1370,598,1420,595,1440,595,1460,610,1495,577,1515,577,1530,598,1550,588,1568,585]);
ra(640,[0,587,30,583,52,586,72,571,90,590,105,577,125,580,160,574,200,582,250,580,285,590,305,610,320,618,340,620,360,628,380,625,410,610,440,620,500,625,520,612,555,610,580,600,610,590,640,590,670,595,695,592,720,602,740,606,757,622,780,607,810,574,840,590,865,602,885,604,900,598,935,610,975,607,1025,617,1045,603,1100,589,1120,601,1150,599,1190,599,1205,608,1225,603,1245,613,1260,598,1280,595,1300,604,1320,608,1350,628,1380,618,1405,604,1420,610,1440,604,1460,613,1480,614,1515,622,1530,610,1568,613]);
ra(1280,[0,613,20,616,72,590,100,603,130,605,150,610,200,616,220,603,250,602,290,590,310,587,350,572,410,562,430,544,487,544,515,578,558,598,580,580,595,577,615,593,640,595,665,587,685,615,700,622,720,638,745,637,790,615,828,598,845,605,880,612,905,607,920,610,945,604,958,607,975,594,995,595,1015,603,1065,605,1082,592,1105,592,1135,604,1157,628,1190,625,1210,629,1225,612,1243,604,1262,607,1298,577]);
$("rsi").setAttribute("points",P(r).join(" "));

/* supertrend */
var s1=[["r",[38,188,43,188,49,200,57,230,65,230,73,234,102,234,109,255,116,270,124,297,139,297,146,315,153,321,161,322,168,325,184,325,190,337,198,350,277,350]],
["g",[277,350,286,336,308,336,315,327,322,315,359,315,367,301,396,301]],
["r",[396,301,403,315,411,344,441,344,448,352,463,352,470,384,529,384]],
["g",[529,384,536,347,602,347,610,320,617,309,640,309,661,308,669,241,773,241]],
["r",[773,241,779,260,786,290,839,290,845,303,897,303]],
["g",[897,303,904,294,964,294,970,236,1178,236]],
["r",[1178,236,1185,263,1192,296,1397.5,296]],
["g",[1397.5,296,1404,267,1420,233,1427,233,1434,222,1442,215,1449,190,1456,147,1500,147]],
["r",[1500,147,1508,160,1553,160,1560,182,1567,213,1575,281,1714,281]],
["g",[1714,281,1722,247,1729,246,1802,246,1810,197]]];
var s2=[["r",[38,678,43,678,51,688,57,704,65,704,71,706,102,706,109,714,124,744,139,744,147,756,153,758,161,758,169,760,184,760,191,771,198,775,278,775]],
["g",[278,775,287,767,308,767,315,762,322,755,359,755,367,746,396,746]],
["r",[396,746,403,754,411,772,441,772,448,776,463,777,470,796,529,796]],
["g",[529,796,536,774,602,774,610,760,617,751,640,751,649,751,661,750,669,710,773,710]],
["r",[773,710,779,720,786,740,839,740,845,747,897,747]],
["g",[897,747,904,742,964,742,970,707,1178,707]],
["r",[1178,707,1185,723,1192,743,1397.5,743]],
["g",[1397.5,743,1405,726,1413,726,1420,723,1427,706,1435,706,1442,696,1449,688,1456,653,1502,653]],
["r",[1502,653,1509,661,1552,661,1567,693,1575,734,1714,734]],
["g",[1714,734,1722,716,1729,713,1802,713,1810,684]]];
function drawS(id,data,w){var G=$(id);data.forEach(function(q){add(G,"polyline",{points:P(q[1]).join(" "),fill:"none",stroke:q[0]=="r"?"#f00":"#0ac010","stroke-width":w,"stroke-linejoin":"round"})})}
drawS("st1",s1,2.6);drawS("st2",s2,1.9);
var all=[];s2.forEach(function(q){all=all.concat(q[1])});
$("stf").setAttribute("points",P(all.concat([1810.5,803,38,803])).join(" "));
</script>
</body></html>
